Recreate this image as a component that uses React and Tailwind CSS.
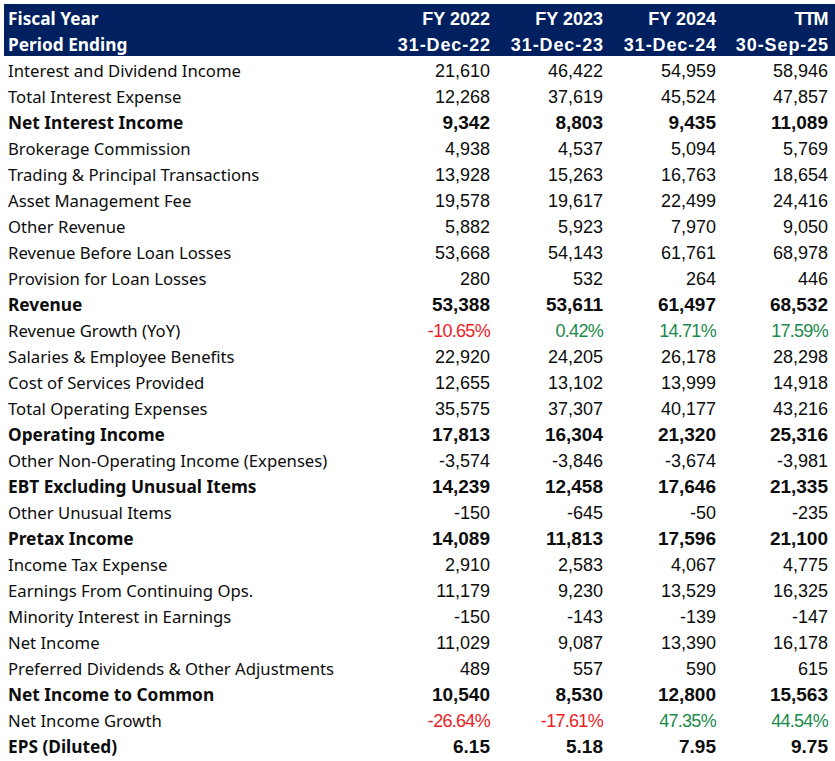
import React from "react";

const rows = [
  ["Interest and Dividend Income", ["21,610", "46,422", "54,959", "58,946"]],
  ["Total Interest Expense", ["12,268", "37,619", "45,524", "47,857"]],
  ["Net Interest Income", ["9,342", "8,803", "9,435", "11,089"], "b"],
  ["Brokerage Commission", ["4,938", "4,537", "5,094", "5,769"]],
  ["Trading & Principal Transactions", ["13,928", "15,263", "16,763", "18,654"]],
  ["Asset Management Fee", ["19,578", "19,617", "22,499", "24,416"]],
  ["Other Revenue", ["5,882", "5,923", "7,970", "9,050"]],
  ["Revenue Before Loan Losses", ["53,668", "54,143", "61,761", "68,978"]],
  ["Provision for Loan Losses", ["280", "532", "264", "446"]],
  ["Revenue", ["53,388", "53,611", "61,497", "68,532"], "b"],
  ["Revenue Growth (YoY)", ["-10.65%", "0.42%", "14.71%", "17.59%"], "g"],
  ["Salaries & Employee Benefits", ["22,920", "24,205", "26,178", "28,298"]],
  ["Cost of Services Provided", ["12,655", "13,102", "13,999", "14,918"]],
  ["Total Operating Expenses", ["35,575", "37,307", "40,177", "43,216"]],
  ["Operating Income", ["17,813", "16,304", "21,320", "25,316"], "b"],
  ["Other Non-Operating Income (Expenses)", ["-3,574", "-3,846", "-3,674", "-3,981"]],
  ["EBT Excluding Unusual Items", ["14,239", "12,458", "17,646", "21,335"], "b"],
  ["Other Unusual Items", ["-150", "-645", "-50", "-235"]],
  ["Pretax Income", ["14,089", "11,813", "17,596", "21,100"], "b"],
  ["Income Tax Expense", ["2,910", "2,583", "4,067", "4,775"]],
  ["Earnings From Continuing Ops.", ["11,179", "9,230", "13,529", "16,325"]],
  ["Minority Interest in Earnings", ["-150", "-143", "-139", "-147"]],
  ["Net Income", ["11,029", "9,087", "13,390", "16,178"]],
  ["Preferred Dividends & Other Adjustments", ["489", "557", "590", "615"]],
  ["Net Income to Common", ["10,540", "8,530", "12,800", "15,563"], "b"],
  ["Net Income Growth", ["-26.64%", "-17.61%", "47.35%", "44.54%"], "g"],
  ["EPS (Diluted)", ["6.15", "5.18", "7.95", "9.75"], "b"],
];

const colPad = ["pr-[1px]", "pr-[1px]", "pr-[1px]", "pr-[7px]"];

export default function App() {
  return (
    <div className="w-[835px] h-[761px] bg-white pt-[4px] pl-[4px] text-[#0d0d0d]">
      <div className="grid grid-cols-[374px_113px_113px_113px_118px]">
        <div className="h-[26px] pt-[4px] bg-[#002060] text-white font-bold text-[17.3px] pl-[4px] flex items-center font-['Noto_Sans']">Fiscal Year</div>
        {["FY 2022", "FY 2023", "FY 2024"].map((v, i) => (
          <div key={v} className={`h-[26px] pt-[4px] bg-[#002060] text-white font-bold text-[18px] flex items-center justify-end ${colPad[i]} font-['Liberation_Sans']`}>{v}</div>
        ))}
        <div className="h-[26px] pt-[4px] bg-[#002060] text-white font-bold text-[18px] tracking-[-1.5px] flex items-center justify-end pr-[8px] font-['Liberation_Sans']">TTM</div>
        <div className="h-[26px] pt-[4px] bg-[#002060] text-white font-bold text-[17.3px] pl-[4px] flex items-center font-['Noto_Sans']">Period Ending</div>
        {["31-Dec-22", "31-Dec-23", "31-Dec-24", "30-Sep-25"].map((v, i) => (
          <div key={v} className={`h-[26px] pt-[4px] bg-[#002060] text-white font-bold text-[18px] tracking-[0.9px] flex items-center justify-end ${i === 3 ? "pr-[6px]" : "pr-[0px]"} font-['Liberation_Sans']`}>{v}</div>
        ))}
        {rows.map(([l, vals, t]) => (
          <React.Fragment key={l}>
            <div className={`h-[26px] pt-[4px] pl-[4px] flex items-center font-['Noto_Sans'] ${t === "b" ? "font-bold text-[17.3px]" : "text-[16.7px]"}`}>{l}</div>
            {vals.map((v, i) => {
              let cls = "text-[18px]";
              if (t === "b") cls = "text-[19px] font-bold";
              if (t === "g") cls = `text-[18px] tracking-[-0.7px] ${v.startsWith("-") ? "text-[#ee1c25]" : "text-[#1a8a4a]"}`;
              return (
                <div key={i} className={`h-[26px] pt-[4px] flex items-center justify-end font-['Liberation_Sans'] ${colPad[i]} ${cls}`}>{v}</div>
              );
            })}
          </React.Fragment>
        ))}
      </div>
    </div>
  );
}
